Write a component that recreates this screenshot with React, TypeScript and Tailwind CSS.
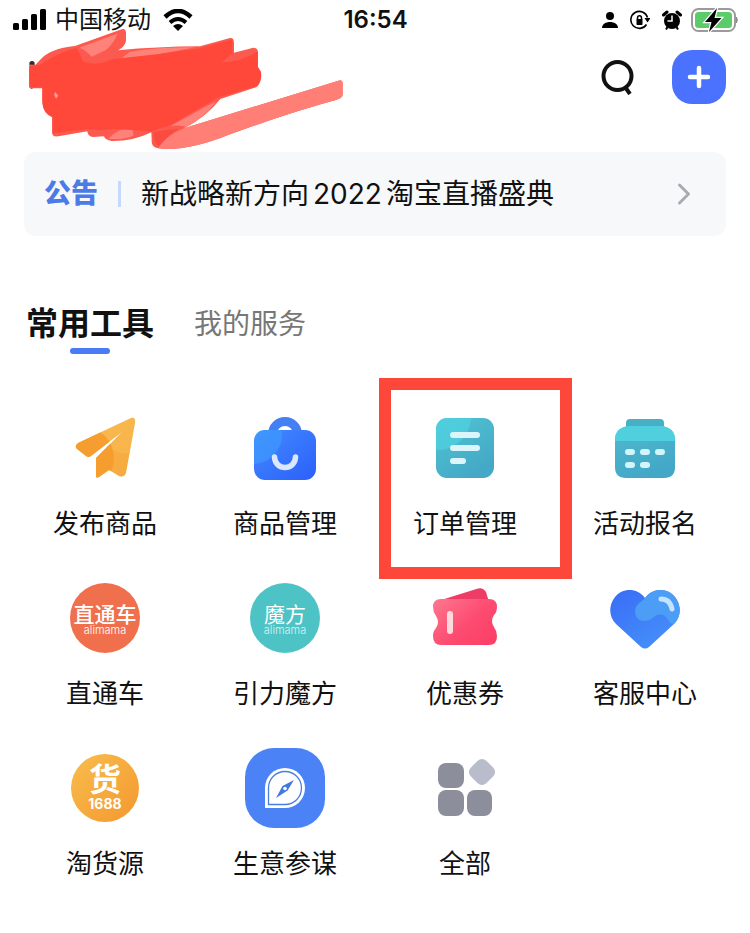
import type { ReactNode } from "react";
import { ChevronRight } from "lucide-react";

const PlaneIcon = () => (
  <svg viewBox="0 0 80 80" className="h-20 w-20" aria-hidden="true">
    <defs>
      <linearGradient id="plane" x1="0" y1="0" x2="1" y2="1">
        <stop offset="0" stopColor="#f8b54a" />
        <stop offset="1" stopColor="#f5a83c" />
      </linearGradient>
      <clipPath id="planeShape">
        <path d="M66 10 Q71 9 70 15 L61 65 Q59 70 54 68 L44 62 L34 69 Q31 71 31 68 L31 50 L57 24 L26 48 Q23 50 21 48 L12 41 Q9 38 13 35 Z" />
      </clipPath>
    </defs>
    <g clipPath="url(#planeShape)">
      <rect width="80" height="80" fill="url(#plane)" />
      <circle cx="66" cy="2" r="44" fill="#ffd873" opacity="0.2" />
      <circle cx="18" cy="50" r="31" fill="#f59b2c" opacity="0.85" />
    </g>
  </svg>
);

const BagIcon = () => (
  <svg viewBox="0 0 80 80" className="h-20 w-20" aria-hidden="true">
    <defs>
      <linearGradient id="bag" x1="0" y1="0" x2="1" y2="1">
        <stop offset="0" stopColor="#428cff" />
        <stop offset="1" stopColor="#2c5ffa" />
      </linearGradient>
      <clipPath id="bagShape">
        <rect x="9" y="22" width="62" height="50" rx="11" />
      </clipPath>
    </defs>
    <circle cx="40" cy="26" r="12.5" fill="none" stroke="#4480f3" strokeWidth="9" />
    <g clipPath="url(#bagShape)">
      <rect x="9" y="22" width="62" height="50" fill="url(#bag)" />
      <circle cx="8" cy="27" r="29" fill="#3fa0ff" opacity="0.55" />
    </g>
    <path d="M29.5 49 C30 63 50 63 50.5 49" fill="none" stroke="#dbe7ff" strokeWidth="5.5" strokeLinecap="round" />
  </svg>
);

const OrderIcon = () => (
  <svg viewBox="0 0 80 80" className="h-20 w-20" aria-hidden="true">
    <defs>
      <linearGradient id="order" x1="0" y1="0" x2="0.6" y2="1">
        <stop offset="0" stopColor="#51c5d3" />
        <stop offset="1" stopColor="#44a8c6" />
      </linearGradient>
      <clipPath id="orderShape">
        <rect x="11" y="10" width="58" height="60" rx="11" />
      </clipPath>
    </defs>
    <g clipPath="url(#orderShape)">
      <rect x="11" y="10" width="58" height="60" fill="url(#order)" />
      <circle cx="13" cy="9" r="33" fill="#50d6e4" opacity="0.6" />
    </g>
    <path d="M28 27H52M28 40H52M28 53H38" stroke="#dcf5fb" strokeWidth="6" strokeLinecap="round" />
  </svg>
);

const SignUpIcon = () => (
  <svg viewBox="0 0 80 80" className="h-20 w-20" aria-hidden="true">
    <defs>
      <linearGradient id="signup" x1="0" y1="0" x2="0.4" y2="1">
        <stop offset="0" stopColor="#4fb9ce" />
        <stop offset="1" stopColor="#43a8c7" />
      </linearGradient>
      <clipPath id="signupShape">
        <path d="M23 18 H57 Q70 20 70 32 V59 Q70 70 59 70 H21 Q10 70 10 59 V32 Q10 20 23 18 Z" />
      </clipPath>
    </defs>
    <rect x="21" y="11" width="38" height="16" rx="4" fill="#48b0c6" />
    <g clipPath="url(#signupShape)">
      <rect x="10" y="18" width="60" height="52" fill="url(#signup)" />
      <rect x="10" y="18" width="60" height="15" fill="#50d0df" />
    </g>
    <path d="M23 44h4M38 44h4M53 44h4M23 57h4M38 57h4" stroke="#d3f4fb" strokeWidth="6" strokeLinecap="round" />
  </svg>
);

const TicketIcon = () => (
  <svg viewBox="0 0 80 80" className="h-20 w-20" aria-hidden="true">
    <defs>
      <linearGradient id="ticket" x1="0" y1="0" x2="1" y2="0.8">
        <stop offset="0" stopColor="#fd7890" />
        <stop offset="0.6" stopColor="#fd4b70" />
        <stop offset="1" stopColor="#fc4068" />
      </linearGradient>
    </defs>
    <path d="M13 23 L53 10.5 Q58 9 61 14 L64 24 Z" fill="#ee3c66" />
    <path
      d="M16 21 H64 Q72 21 72 29 Q72 34 69 37 Q65 43 69 49 Q72 53 72 58 Q72 67 64 67 H16 Q8 67 8 58 Q8 53 11 50 Q15 44 11 38 Q8 34 8 29 Q8 21 16 21 Z"
      fill="url(#ticket)"
    />
    <path d="M25 36V53" stroke="#ffd9dc" strokeWidth="6" strokeLinecap="round" />
  </svg>
);

const HeartIcon = () => (
  <svg viewBox="0 0 80 80" className="h-20 w-20" aria-hidden="true">
    <defs>
      <linearGradient id="heart" x1="0" y1="0" x2="0.6" y2="1">
        <stop offset="0" stopColor="#3766f5" />
        <stop offset="1" stopColor="#4692fb" />
      </linearGradient>
      <clipPath id="heartShape">
        <path d="M40 20 C32 9 17 10 10 19 C3 28 4 39 11 46 L36 69 Q40 72 44 69 L69 46 C76 39 77 28 70 19 C63 10 48 9 40 20 Z" />
      </clipPath>
    </defs>
    <g clipPath="url(#heartShape)">
      <rect width="80" height="80" fill="url(#heart)" />
      <path
        d="M40 20 L50 8 H80 V50 L65 45 C62 38 57 35 52 37 C47 40 45 43 39 43 C33 43 30 38 30 33 C30 27 36 24 40 20 Z"
        fill="#4b9df6"
      />
    </g>
    <path d="M56 21 Q65 21 67 31" fill="none" stroke="#c5e2ff" strokeWidth="5" strokeLinecap="round" />
  </svg>
);

const CompassIcon = () => (
  <svg viewBox="0 0 80 80" className="h-20 w-20" aria-hidden="true">
    <rect width="80" height="80" rx="29" fill="#4b83f7" />
    <path d="M20 60 V40 A20 20 0 1 1 40 60 Z" fill="#fff" />
    <path d="M23.5 56.5 V40 A16.5 16.5 0 1 1 40 56.5 Z" fill="none" stroke="#4b7de0" strokeWidth="1.3" />
    <path d="M49 32 L42.500 42.5 L31 50 L37.5 38 Z" fill="#4179e0" />
    <circle cx="40" cy="40.5" r="1.8" fill="#fff" />
  </svg>
);

const AllIcon = () => (
  <svg viewBox="0 0 80 80" className="h-20 w-20" aria-hidden="true">
    <g fill="#8c8f9b">
      <rect x="13" y="15" width="26" height="25" rx="8" />
      <rect x="13" y="42" width="26" height="26" rx="8" />
      <rect x="42" y="42" width="25" height="26" rx="8" />
    </g>
    <rect x="46" y="13" width="22" height="22" rx="6" fill="#b9bdcb" transform="rotate(45 57 24)" />
  </svg>
);

const TrainBadge = () => (
  <span className="flex h-[70px] w-[70px] flex-col items-center justify-center rounded-full bg-[#f0704d] pt-1 text-white">
    <span className="text-[21px] leading-[21px] font-medium whitespace-nowrap">直通车</span>
    <span className="text-[11px] leading-[11px] font-light">alimama</span>
  </span>
);

const CubeBadge = () => (
  <span className="flex h-[70px] w-[70px] flex-col items-center justify-center rounded-full bg-[#4dc3c5] pt-1 text-white">
    <span className="text-[21px] leading-[21px] font-normal whitespace-nowrap">魔方</span>
    <span className="text-[11px] leading-[11px] font-light text-[#d5f3f3]">alimama</span>
  </span>
);

const SourceBadge = () => (
  <span className="flex h-[68px] w-[68px] flex-col items-center justify-center rounded-full bg-linear-to-br from-[#f8bd4c] to-[#f3982f] text-white">
    <span className="text-[32px] leading-8 font-bold">货</span>
    <span className="text-sm leading-4 font-bold">1688</span>
  </span>
);

const tools: { label: string; icon: ReactNode; marked?: boolean }[] = [
  { label: "发布商品", icon: <PlaneIcon /> },
  { label: "商品管理", icon: <BagIcon /> },
  { label: "订单管理", icon: <OrderIcon />, marked: true },
  { label: "活动报名", icon: <SignUpIcon /> },
  { label: "直通车", icon: <TrainBadge /> },
  { label: "引力魔方", icon: <CubeBadge /> },
  { label: "优惠券", icon: <TicketIcon /> },
  { label: "客服中心", icon: <HeartIcon /> },
  { label: "淘货源", icon: <SourceBadge /> },
  { label: "生意参谋", icon: <CompassIcon /> },
  { label: "全部", icon: <AllIcon /> },
];

const StatusBar = () => (
  <div className="flex h-10 items-center pr-3 pl-[13px]">
    <div className="flex flex-1 items-center gap-2">
      <svg viewBox="0 0 34 22" className="h-[22px] w-[34px]" aria-hidden="true">
        <rect x="0" y="14" width="6" height="7" rx="1.5" />
        <rect x="9" y="10" width="6" height="11" rx="1.5" />
        <rect x="18" y="5" width="6" height="16" rx="1.5" />
        <rect x="27" y="0" width="6" height="21" rx="1.5" />
      </svg>
      <span className="text-2xl">中国移动</span>
      <svg viewBox="0 0 30 22" className="ml-1 h-[22px] w-[30px]" aria-hidden="true">
        <path d="M2 8 Q15 -4 28 8" fill="none" stroke="#000" strokeWidth="4.5" />
        <path d="M7 13.5 Q15 6.5 23 13.5" fill="none" stroke="#000" strokeWidth="4" />
        <path d="M10 17 Q15 13 20 17 L15 22 Z" />
      </svg>
    </div>
    <span className="text-2xl font-semibold">16:54</span>
    <div className="flex flex-1 items-center justify-end gap-3">
      <svg viewBox="0 0 16 18" className="h-[18px] w-4" aria-hidden="true">
        <circle cx="8" cy="5" r="4" />
        <path d="M0 17 C0 9 16 9 16 17 Z" />
      </svg>
      <svg viewBox="0 0 20 20" className="h-5 w-5" aria-hidden="true">
        <path d="M16.5 14.5 A8.5 8.5 0 1 1 17.5 7.5" fill="none" stroke="#000" strokeWidth="1.6" />
        <path d="M14.5 8 H20.5 L17.500 12.5 Z" />
        <path d="M7.5 10 V8 Q7.5 5.8 9.5 5.8 T11.5 8 V10" fill="none" stroke="#000" strokeWidth="1.5" />
        <rect x="6.5" y="9" width="6" height="6" rx="0.8" />
      </svg>
      <svg viewBox="0 0 20 20" className="h-5 w-5" aria-hidden="true">
        <circle cx="10" cy="11" r="8" />
        <path d="M1.500 5 L5 2 M18.5 5 L15 2" stroke="#000" strokeWidth="3" strokeLinecap="round" />
        <path d="M4 19.5 L5.5 17 M16 19.5 L14.5 17" stroke="#000" strokeWidth="2" />
        <path d="M10 5.5 V11 H5.5" fill="none" stroke="#fff" strokeWidth="1.5" />
      </svg>
      <svg viewBox="0 0 48 26" className="-ml-1 h-[26px] w-12" aria-hidden="true">
        <rect x="2" y="2" width="43" height="22" rx="6.5" fill="#fff" stroke="#9b9b9b" strokeWidth="2" />
        <rect x="5" y="5" width="37" height="16" rx="3.5" fill="#5ccb6a" />
        <path d="M46.5 10 Q48 13 46.5 16 Z" fill="#8a8a8a" stroke="#8a8a8a" />
        <path d="M27 1 L15 15 H21.5 L19 25 L31.5 11 H24.5 Z" stroke="#fff" strokeWidth="2.5" paintOrder="stroke" />
      </svg>
    </div>
  </div>
);

// Marker strokes that hide the shop name
const Scribble = () => (
  <svg viewBox="75 81 960 372" className="absolute -top-[23px] left-[25px] h-[124px] w-80" aria-hidden="true">
    <circle cx="96" cy="191" r="8" fill="#3b2a2c" />
    <circle cx="95" cy="259" r="7" fill="#3b2a2c" />
    <path
      d="M120 180 Q150 145 225 138 L365 88 Q378 84 378 100 V122 Q376 138 355 151 Q470 140 600 139 L690 114 Q702 112 702 130 V158 L760 143 Q775 143 774 160 V200 L783 215 Q787 248 770 261 L661 297 Q620 350 552 385 L1015 242 Q1028 238 1028 252 V284 Q1027 294 1010 299 Q860 340 690 403 Q560 456 475 445 Q453 441 455 420 L454 397 Q400 424 335 423 Q315 420 312 409 L278 411 Q262 408 262 394 L175 409 Q155 412 156 394 V352 Q130 342 127 310 V265 H92 Q85 260 87 245 V200 Q88 190 105 196 Z"
      fill="#fc5a4f"
    />
    <path d="M552 385 L1015 242 Q1028 238 1028 252 V284 Q1027 294 1010 299 Q860 340 690 403 Q560 456 475 445 Q500 405 552 385 Z" fill="#ff7f77" />
    <path d="M238 143 L352 101 Q345 125 318 150 L275 170 Q255 148 238 143 Z M390 155 Q480 141 585 142 Q470 165 350 186 Z M325 416 Q355 385 398 379 L400 407 Q365 421 325 416 Z M560 381 Q530 374 512 378 L620 318 L648 305 Q610 355 560 381 Z" fill="#ff827a" />
    <path d="M120 194 Q180 155 230 144 L250 185 Q290 200 335 178 Q470 165 600 145 L697 118 V160 L665 187 Q720 188 773 154 V204 L783 218 Q785 245 768 259 L655 292 L510 376 L455 394 L340 387 L300 390 L265 387 L160 400 V350 Q127 339 127 300 V262 H92 Q87 250 89 198 Z" fill="#ff483a" />
    <path d="M460 397 Q490 390 537 386 Q500 408 476 438 Q460 430 460 397 Z" fill="#fa4b40" />
    <path d="M162 284 L166 276 L175 287 L168 296 Z" fill="#ff9a92" />
  </svg>
);

export default function App() {
  return (
    <main className="min-h-screen bg-white pb-12 font-[Inter,'Noto_Sans_CJK_SC',sans-serif] text-[#111]">
      <StatusBar />

      <header className="relative mt-[10px] flex items-center justify-end gap-9 px-6">
        <Scribble />
        <button type="button" aria-label="搜索">
          <svg viewBox="0 0 36 36" className="h-9 w-9" fill="none" stroke="#111" strokeWidth="4">
            <circle cx="17.5" cy="17" r="14" />
            <path d="M25 28 L30 35" />
          </svg>
        </button>
        <button
          type="button"
          aria-label="添加"
          className="flex h-[54px] w-[54px] items-center justify-center rounded-[20px] bg-[#4a72fe]"
        >
          <svg viewBox="0 0 24 24" className="h-6 w-6" stroke="#fff" strokeWidth="4.5" strokeLinecap="round">
            <path d="M12 3V21M3 12H21" />
          </svg>
        </button>
      </header>

      <a href="#notice" className="mx-6 mt-12 flex h-[84px] items-center rounded-xl bg-[#f7f8fa] px-5">
        <span className="text-[27px] font-black text-[#4c7be8]">公告</span>
        <span className="ml-5 h-[26px] w-[3px] bg-[#c6d8fb]" />
        <span className="ml-5 flex-1 text-[28px]">
          新战略新方向<span className="mx-1">2022</span>淘宝直播盛典
        </span>
        <ChevronRight className="mr-1 h-9 w-9 text-[#a9abb0]" strokeWidth={2} />
      </a>

      <div role="tablist" className="mt-[68px] flex items-start gap-10 px-[26px]">
        <button type="button" role="tab" aria-selected="true" className="flex flex-col items-center gap-1">
          <span className="text-[32px] leading-10 font-bold">常用工具</span>
          <span className="h-[6px] w-10 rounded-full bg-[#4b7af5]" />
        </button>
        <button type="button" role="tab" aria-selected="false" className="text-[28px] leading-10 text-[#777]">
          我的服务
        </button>
      </div>

      <div className="mt-[54px] grid grid-cols-4 gap-y-[38px] px-[15px]">
        {tools.map((tool) => (
          <button key={tool.label} type="button" className="relative flex flex-col items-center gap-5">
            <span className="flex h-20 w-20 items-center justify-center">{tool.icon}</span>
            <span className="text-[26px] leading-8 whitespace-nowrap">{tool.label}</span>
            {tool.marked && (
              <span className="absolute -top-[30px] -right-[17px] -bottom-[39px] left-1 border-12 border-[#fc473a]" />
            )}
          </button>
        ))}
      </div>
    </main>
  );
}
